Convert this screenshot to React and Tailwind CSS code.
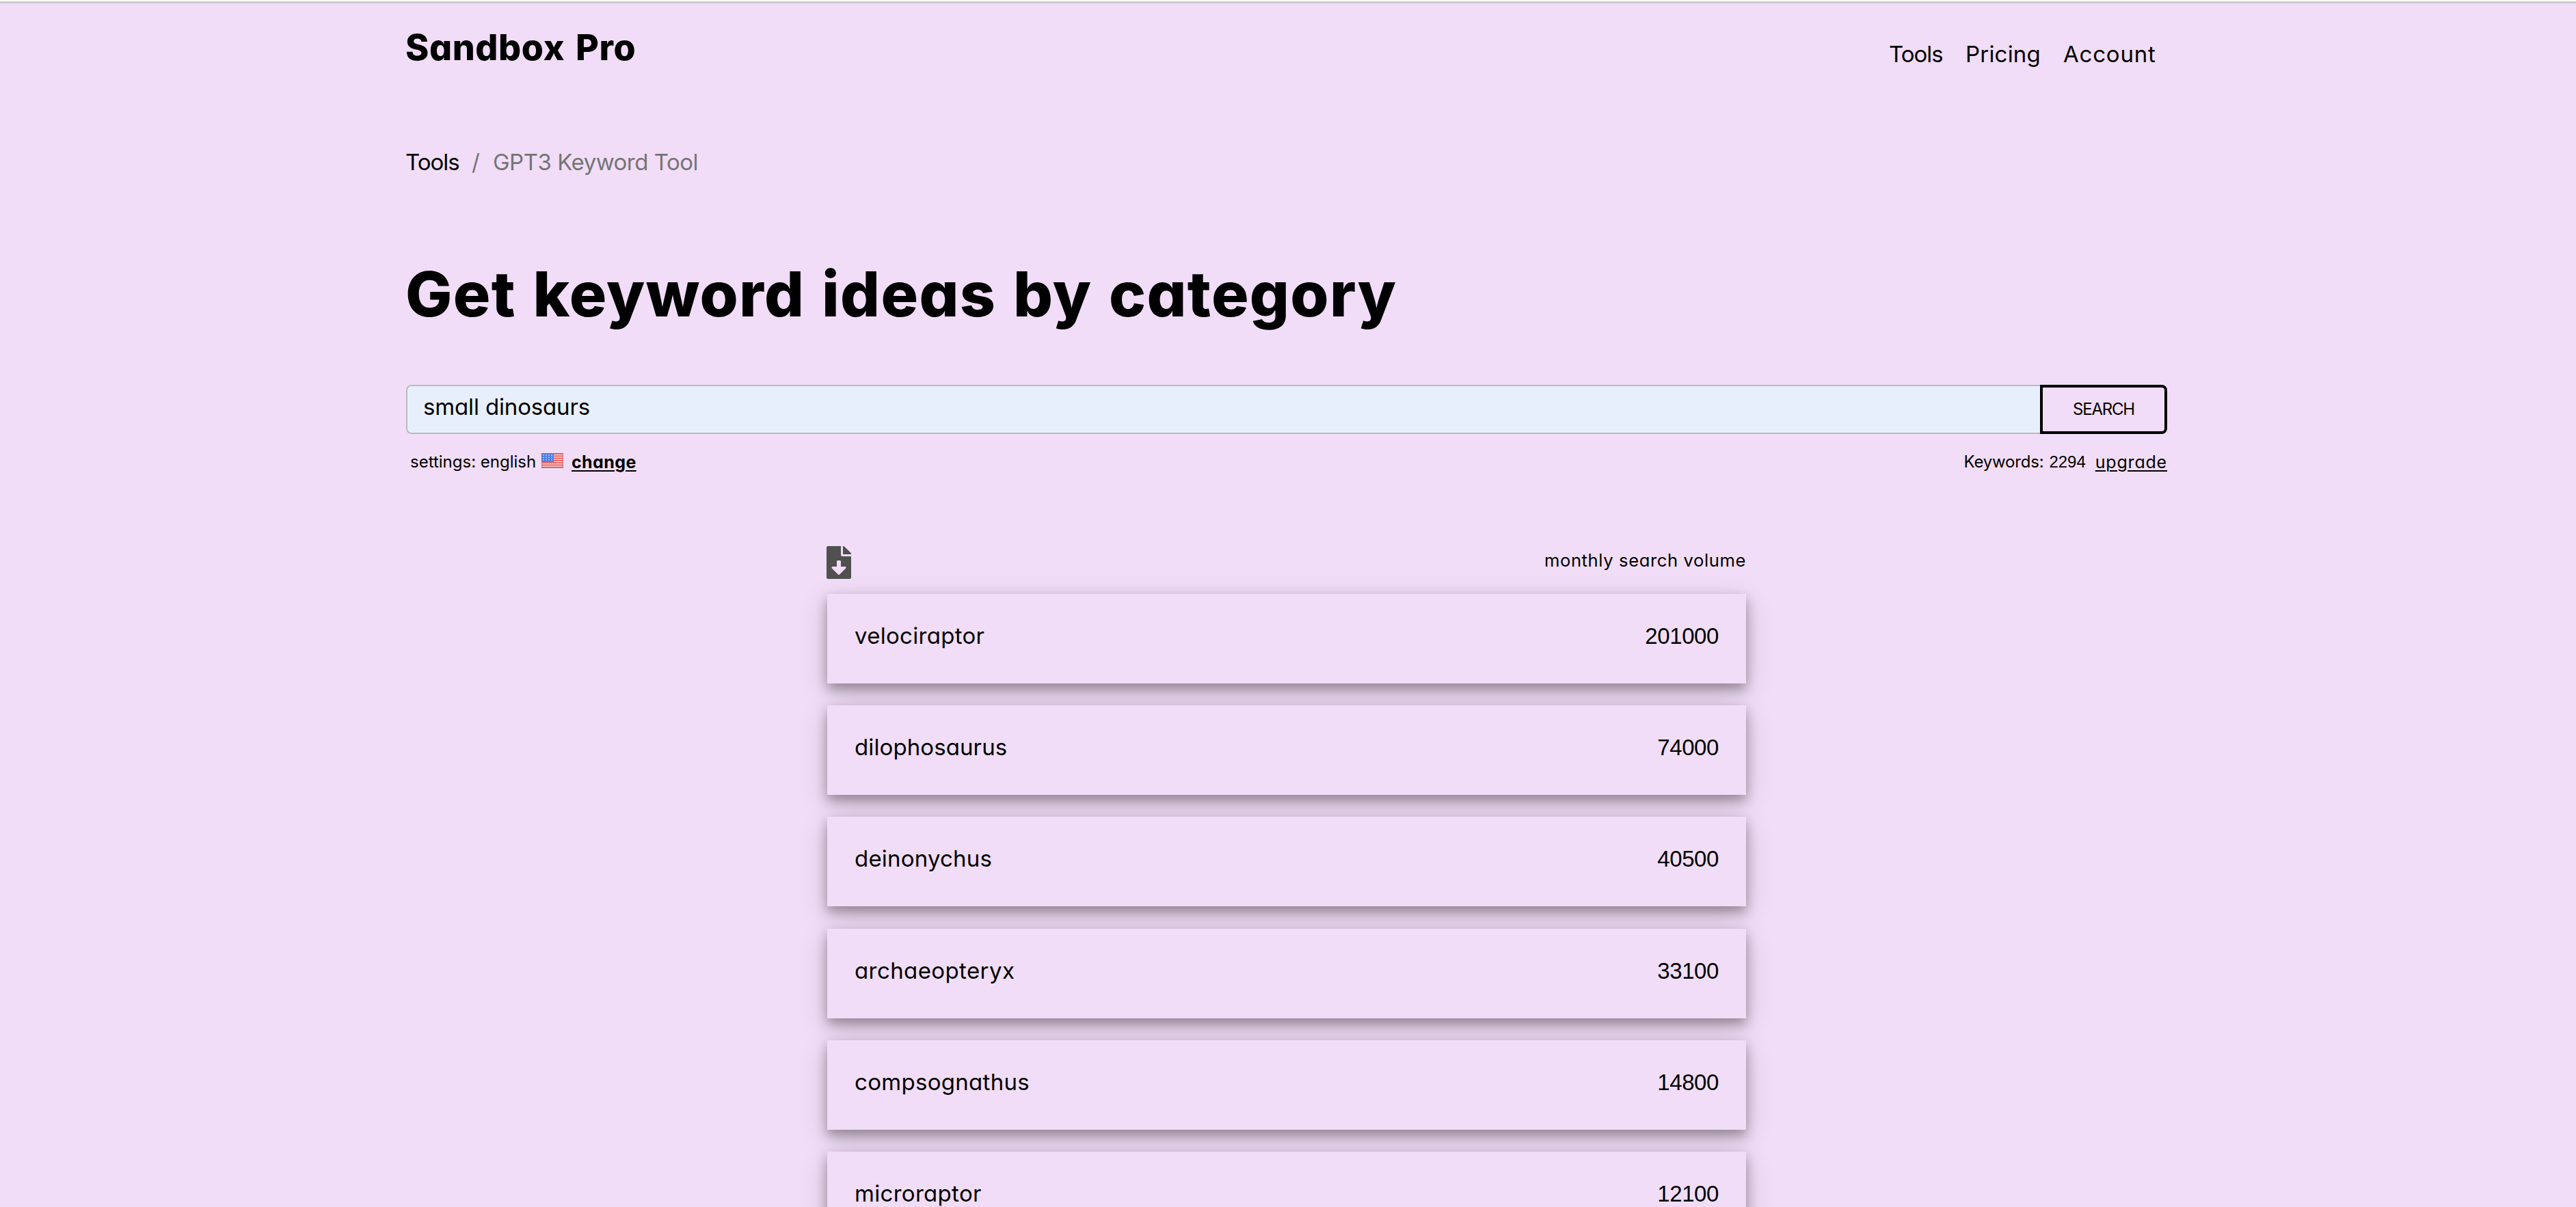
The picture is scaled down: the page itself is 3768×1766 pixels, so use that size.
import { useState } from "react";
import { FaFileDownload } from "react-icons/fa";

const results = [
  { keyword: "velociraptor", volume: 201000, track: "tracking-[0.3px]" },
  { keyword: "dilophosaurus", volume: 74000, track: "tracking-[0.1px]" },
  { keyword: "deinonychus", volume: 40500, track: "tracking-[0.2px]" },
  { keyword: "archaeopteryx", volume: 33100, track: "tracking-[0.4px]" },
  { keyword: "compsognathus", volume: 14800, track: "tracking-[0.3px]" },
  { keyword: "microraptor", volume: 12100, track: "tracking-[0.3px]" },
];

function UsFlag() {
  return (
    <svg width="32" height="22" viewBox="0 0 32 22" className="block">
      <rect width="32" height="22" fill="#f7e3e4" />
      {[0, 1, 2, 3, 4, 5, 6].map(i => (
        <rect key={i} y={i * 3.3} width="32" height="1.9" fill="#ee5b56" />
      ))}
      <rect width="18" height="13" fill="#4a7fe6" />
      {[3, 6.3, 9.6].map(y =>
        [3, 7, 11, 15].map(x => <circle key={`${x}-${y}`} cx={x} cy={y} r="0.9" fill="#c3d8fb" />)
      )}
      <rect x="0.75" y="0.75" width="30.5" height="20.5" fill="none" stroke="#8a5a86" strokeOpacity="0.35" strokeWidth="1.5" />
    </svg>
  );
}

function Header() {
  return (
    <header className="flex justify-between items-start pt-[35px] h-[94px]">
      <a href="#" className="-ml-px text-[52px] leading-[60px] font-extrabold tracking-[0.6px] [word-spacing:4px]">Sandbox Pro</a>
      <nav className="flex mt-[19px] mr-[16px] text-[33px] leading-10">
        <a href="#" className="w-[112px] tracking-[-1px]">Tools</a>
        <a href="#" className="w-[143px] tracking-[0.2px]">Pricing</a>
        <a href="#" className="w-[136px] tracking-[0.8px]">Account</a>
      </nav>
    </header>
  );
}

function ResultCard({ keyword, volume, track }) {
  return (
    <div className="relative flex justify-between h-[131px] px-10 pt-[41px] bg-[#f1ddf7] text-[33px] leading-10 shadow-[0_8px_16px_rgba(0,0,0,0.32),0_12px_40px_rgba(0,0,0,0.16)]">
      <span className={track}>{keyword}</span>
      <span className="mt-px font-['Liberation_Sans',sans-serif] tracking-[-0.4px]">{volume}</span>
    </div>
  );
}

export default function App() {
  const [query, setQuery] = useState("small dinosaurs");

  return (
    <div className="w-full h-[1766px] overflow-hidden bg-[#f1ddf7] text-black font-['Inter',sans-serif] [font-feature-settings:'cv11']">
      <div className="h-[5px] bg-[#c9c9cb] border-t-2 border-white" />

      <div className="w-[2576px] ml-[594px]">
        <Header />

        <div className="flex mt-[118px] -ml-px text-[33px] leading-10">
          <a href="#" className="w-[97px] tracking-[-1px]">Tools</a>
          <span className="w-[31px] text-[#757575]">/</span>
          <span className="text-[#757575] tracking-[-0.5px]">GPT3 Keyword Tool</span>
        </div>

        <h1 className="mt-[118px] -ml-px text-[91px] leading-[110px] font-extrabold tracking-[1.3px] [word-spacing:3.5px] whitespace-nowrap">
          Get keyword ideas by category
        </h1>

        <form className="flex mt-[78px] h-[72px]" onSubmit={e => e.preventDefault()}>
          <input
            value={query}
            onChange={e => setQuery(e.target.value)}
            className="flex-1 min-w-0 pl-[23px] pb-[6px] bg-[#e8effc] border-2 border-r-0 border-[#bbbbbb] rounded-l-[8px] text-[33px] tracking-[-0.15px] outline-none"
          />
          <button className="w-[186px] border-4 border-black rounded-r-[8px] text-2xl tracking-[-1.2px]">SEARCH</button>
        </form>

        <div className="flex justify-between mt-[25px] text-2xl leading-8">
          <div className="flex items-start pl-[6px]">
            <span className="w-[192px]">settings: english</span>
            <span className="mt-[3px]"><UsFlag /></span>
            <a href="#" className="ml-[12px] text-[25px] font-bold tracking-[0.4px] underline decoration-2 underline-offset-[3px]">change</a>
          </div>
          <div className="flex">
            <span className="tracking-[-0.2px]">Keywords:</span>
            <span className="ml-[8px] font-['Liberation_Sans',sans-serif]">2294</span>
            <a href="#" className="ml-[14px] text-[25px] tracking-[0.8px] underline decoration-2 underline-offset-[3px]">upgrade</a>
          </div>
        </div>

        <div className="w-[1344px] ml-[616px] mt-[107px]">
          <div className="flex justify-between h-12 -ml-px">
            <FaFileDownload className="w-[36px] h-12 text-[#505050]" />
            <span className="mt-[5px] text-[25.6px] leading-8 tracking-[0.6px]">monthly search volume</span>
          </div>
          <div className="flex flex-col gap-[32.2px] mt-[22px]">
            {results.map(r => <ResultCard key={r.keyword} {...r} />)}
          </div>
        </div>
      </div>
    </div>
  );
}
